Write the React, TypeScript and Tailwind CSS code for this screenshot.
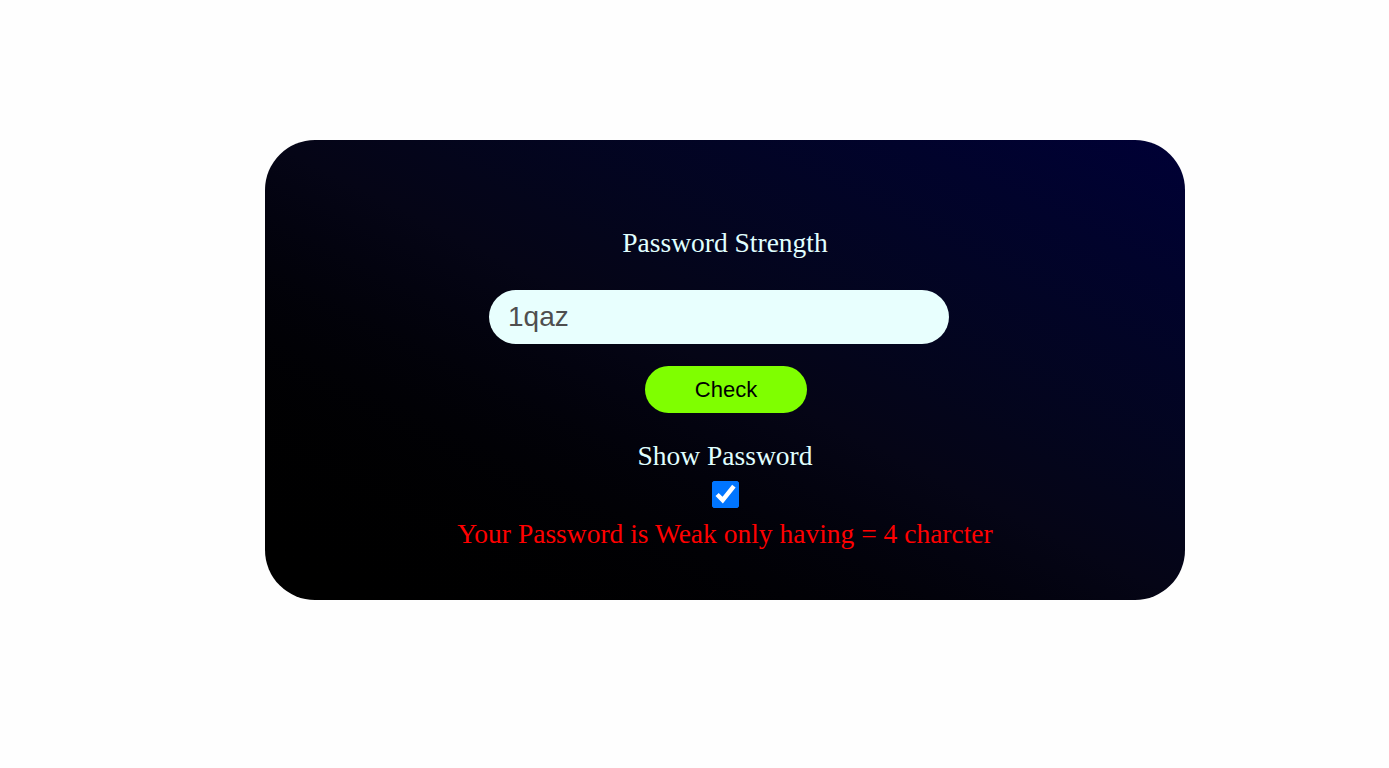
import React, { useState } from 'react';

export default function App() {
  const [password, setPassword] = useState('1qaz');
  const [show, setShow] = useState(true);

  return (
    <div className="min-h-screen w-full bg-[#fefefe] pt-[140px]">
      <div className="ml-[265px] flex h-[460px] w-[920px] flex-col items-center rounded-[50px] bg-linear-to-tr from-black via-[#050516] to-[#000036] pt-[87px] font-['Liberation_Serif',serif]">
        <h2 className="text-[27.5px] leading-[32px] font-normal text-[#e0ffff]">Password Strength</h2>
        <input
          type={show ? 'text' : 'password'}
          value={password}
          onChange={(e) => setPassword(e.target.value)}
          className="mt-[31px] mr-[12px] h-[54px] w-[460px] rounded-full bg-[#e8fffe] pl-[19px] font-['Liberation_Sans',Arial,sans-serif] text-[28px] text-[#4f4f4f] outline-none"
        />
        <button className="mt-[22px] ml-[2px] h-[47px] w-[162px] rounded-full bg-[#7fff00] font-['Liberation_Sans',Arial,sans-serif] text-[22px] text-black">
          Check
        </button>
        <label className="mt-[27px] text-[27.5px] leading-[32px] text-[#e0ffff]">Show Password</label>
        <div className="mt-[8px] flex h-[28px] w-[28px] items-center justify-center">
          <input
            type="checkbox"
            checked={show}
            onChange={(e) => setShow(e.target.checked)}
            className="m-0 h-[13px] w-[13px] scale-[2.15]"
          />
        </div>
        <p className="mt-[10px] text-[27.5px] leading-[32px] text-[#ff0000]">
          Your Password is Weak only having = {password.length} charcter
        </p>
      </div>
    </div>
  );
}
